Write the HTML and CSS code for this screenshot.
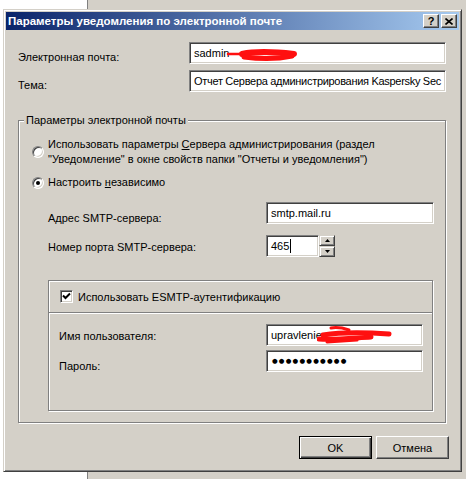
FILE: index.html
```html
<!DOCTYPE html>
<html>
<head>
    <title>Параметры уведомления по электронной почте</title>
    <link rel="stylesheet" href="styles.css">
</head>
<body>
    <div class="dialog">
        <div class="titlebar">
            <span class="title">Параметры уведомления по электронной почте</span>
            <div class="title-buttons">
                <span class="tbtn help">?</span>
                <span class="tbtn">
                    <svg width="8" height="7" viewBox="0 0 8 7">
                        <path d="M0.5 0.5 L7.5 6.5 M7.5 0.5 L0.5 6.5" stroke="#000" stroke-width="1.6"/>
                    </svg>
                </span>
            </div>
        </div>

        <div class="content">
            <div class="form-grid">
                <span class="label">Электронная почта:</span>
                <div class="field">
                    sadmin
                    <svg class="scribble" width="72" height="14" viewBox="0 0 72 14">
                        <path d="M2 6 L 22 6" stroke="#ff1010" stroke-width="2.5" fill="none" stroke-linecap="round"/>
                        <path d="M16 6 C 30 3, 50 4, 68 6" stroke="#ff1010" stroke-width="6" fill="none" stroke-linecap="round"/>
                        <path d="M18 9 C 34 11, 52 11, 66 8" stroke="#ff1010" stroke-width="5" fill="none" stroke-linecap="round"/>
                    </svg>
                </div>
                <span class="label">Тема:</span>
                <div class="field subject">Отчет Сервера администрирования Kaspersky Sec</div>
            </div>

            <div class="group">
                <span class="group-title">Параметры электронной почты</span>

                <div class="radio-row first">
                    <span class="radio"></span>
                    <span>Использовать параметры <u>С</u>ервера администрирования (раздел<br>"Уведомление" в окне свойств папки "Отчеты и уведомления")</span>
                </div>
                <div class="radio-row">
                    <span class="radio checked"></span>
                    <span>Настроить <u>н</u>езависимо</span>
                </div>

                <div class="smtp-grid">
                    <span class="label low">Адрес SMTP-сервера:</span>
                    <div class="field">smtp.mail.ru</div>
                    <span class="label">Номер порта SMTP-сервера:</span>
                    <div class="spin">
                        <div class="field port">465<span class="caret"></span></div>
                        <div class="spin-buttons">
                            <span class="spin-btn"><svg width="5" height="3" viewBox="0 0 5 3"><path d="M2.5 0 L5 3 L0 3 Z" fill="#000"/></svg></span>
                            <span class="spin-btn"><svg width="5" height="3" viewBox="0 0 5 3"><path d="M0 0 L5 0 L2.5 3 Z" fill="#000"/></svg></span>
                        </div>
                    </div>
                </div>

                <div class="auth">
                    <div class="auth-head">
                        <span class="checkbox">
                            <svg width="9" height="9" viewBox="0 0 9 9">
                                <path d="M1 3.5 L3.5 6 L8 1.5" stroke="#000" stroke-width="2" fill="none"/>
                            </svg>
                        </span>
                        <span>Использовать ESMTP-аутентификацию</span>
                    </div>
                    <div class="auth-grid">
                        <span class="label">Имя пользователя:</span>
                        <div class="field">
                            upravlenie
                            <svg class="scribble user" width="78" height="20" viewBox="0 0 78 20">
                                <path d="M14 3 C 20 2, 26 3, 32 5" stroke="#ff1010" stroke-width="3" fill="none" stroke-linecap="round"/>
                                <path d="M6 10 C 24 7, 46 7, 72 9" stroke="#ff1010" stroke-width="5" fill="none" stroke-linecap="round"/>
                                <path d="M2 14 C 20 15, 36 13, 54 12" stroke="#ff1010" stroke-width="5" fill="none" stroke-linecap="round"/>
                                <path d="M10 17 L 40 15" stroke="#ff1010" stroke-width="3" fill="none" stroke-linecap="round"/>
                            </svg>
                        </div>
                        <span class="label low">Пароль:</span>
                        <div class="field dots">●●●●●●●●●●●</div>
                    </div>
                </div>
            </div>

            <div class="buttons">
                <span class="btn default">OK</span>
                <span class="btn">Отмена</span>
            </div>
        </div>
    </div>
</body>
</html>
```

FILE: styles.css
```css
body {
    margin: 0;
    height: 479px;
    overflow: hidden;
    font-family: "Liberation Sans", Arial, sans-serif;
    font-size: 11px;
    color: #000;
    background: linear-gradient(to right, #fff 0 87px, #808080 87px 88px, #d4d0c8 88px);
}

.dialog {
    margin: 9px 0 0 3px;
    width: 459px;
    height: 463px;
    box-sizing: border-box;
    padding: 2px;
    background: #d4d0c8;
    border: 1px solid;
    border-color: #d4d0c8 #404040 #404040 #d4d0c8;
    box-shadow: inset 1px 1px 0 #fff, inset -1px -1px 0 #808080;
}

.titlebar {
    height: 18px;
    display: flex;
    align-items: center;
    padding: 0 2px 0 2px;
    background: linear-gradient(to right, #0a246a, #a6caf0);
}

.title {
    flex: 1;
    color: #fff;
    font-weight: bold;
    font-size: 11.5px;
}

.title-buttons {
    display: flex;
    gap: 2px;
}

.tbtn {
    width: 16px;
    height: 14px;
    box-sizing: border-box;
    display: flex;
    align-items: center;
    justify-content: center;
    background: #d4d0c8;
    border: 1px solid;
    border-color: #fff #404040 #404040 #fff;
    box-shadow: inset -1px -1px 0 #808080;
    font-weight: bold;
    font-size: 11px;
}

.content {
    padding: 12px 13px 0 12px;
}

.form-grid {
    display: grid;
    grid-template-columns: 171px 257px;
    row-gap: 6px;
    align-items: center;
}

.label {
    padding-top: 2px;
}

.form-grid .label {
    padding-top: 8px;
}

.label.low {
    padding-top: 10px;
}

.field {
    position: relative;
    height: 22px;
    box-sizing: border-box;
    padding: 0 2px 0 4px;
    line-height: 20px;
    background: #fff;
    border: 1px solid;
    border-color: #808080 #fff #fff #808080;
    box-shadow: inset 1px 1px 0 #404040, inset -1px -1px 0 #d4d0c8;
    white-space: nowrap;
    overflow: hidden;
}

.field.subject {
    padding-right: 0;
    letter-spacing: -0.3px;
}

.scribble {
    position: absolute;
    left: 36px;
    top: 5px;
}

.scribble.user {
    left: 50px;
    top: 0;
}

.group {
    margin-top: 28px;
    padding: 0 12px 11px 13px;
    border: 1px solid #808080;
    box-shadow: inset 1px 1px 0 #fff, 1px 1px 0 #fff;
}

.group-title {
    display: table;
    margin: -8px 0 0 -8px;
    padding: 0 2px;
    line-height: 14px;
    background: #d4d0c8;
}

.radio-row {
    display: flex;
    align-items: center;
    gap: 4px;
    margin-top: 8px;
    line-height: 15px;
}

.radio-row.first {
    margin-top: 10px;
}

.radio {
    position: relative;
    width: 12px;
    height: 12px;
    box-sizing: border-box;
    flex: none;
    border-radius: 50%;
    background: #fff;
    border: 1px solid;
    border-color: #808080 #fff #fff #808080;
    box-shadow: inset 1px 1px 0 #404040, inset -1px -1px 0 #d4d0c8;
}

.radio.checked::after {
    content: "";
    position: absolute;
    left: 3px;
    top: 3px;
    width: 4px;
    height: 4px;
    border-radius: 50%;
    background: #000;
}

.smtp-grid {
    display: grid;
    grid-template-columns: 218px 168px;
    row-gap: 11px;
    align-items: center;
    margin: 12px 0 0 16px;
}

.spin {
    display: flex;
}

.field.port {
    width: 53px;
}

.caret {
    display: inline-block;
    width: 1px;
    height: 14px;
    margin-left: 1px;
    vertical-align: -3px;
    background: #000;
}

.spin-buttons {
    display: flex;
    flex-direction: column;
}

.spin-btn {
    width: 16px;
    height: 11px;
    box-sizing: border-box;
    display: flex;
    align-items: center;
    justify-content: center;
    background: #d4d0c8;
    border: 1px solid;
    border-color: #d4d0c8 #404040 #404040 #d4d0c8;
    box-shadow: inset 1px 1px 0 #fff, inset -1px -1px 0 #808080;
}

.auth {
    margin: 23px 0 0 16px;
    border: 1px solid #808080;
    box-shadow: inset 1px 1px 0 #fff, 1px 1px 0 #fff;
}

.auth-head {
    height: 31px;
    display: flex;
    align-items: center;
    gap: 5px;
    padding-left: 11px;
    border-bottom: 1px solid #808080;
    box-shadow: 0 1px 0 #fff;
}

.checkbox {
    width: 13px;
    height: 13px;
    box-sizing: border-box;
    display: flex;
    align-items: center;
    justify-content: center;
    background: #fff;
    border: 1px solid;
    border-color: #808080 #fff #fff #808080;
    box-shadow: inset 1px 1px 0 #404040, inset -1px -1px 0 #d4d0c8;
}

.auth-grid {
    display: grid;
    grid-template-columns: 207px 157px;
    row-gap: 4px;
    align-items: center;
    padding: 11px 0 38px 10px;
}

.field.dots {
    font-family: "DejaVu Sans", sans-serif;
    font-size: 6.5px;
    letter-spacing: 1.2px;
    padding-left: 5px;
}

.buttons {
    display: flex;
    justify-content: flex-end;
    gap: 4px;
    margin: 13px -3px 0 0;
}

.btn {
    width: 73px;
    height: 23px;
    box-sizing: border-box;
    display: flex;
    align-items: center;
    justify-content: center;
    background: #d4d0c8;
    border: 1px solid;
    border-color: #fff #404040 #404040 #fff;
    box-shadow: inset -1px -1px 0 #808080;
}

.btn.default {
    border: 1px solid #000;
    box-shadow: inset 1px 1px 0 #fff, inset -1px -1px 0 #404040, inset -2px -2px 0 #808080;
}
```
